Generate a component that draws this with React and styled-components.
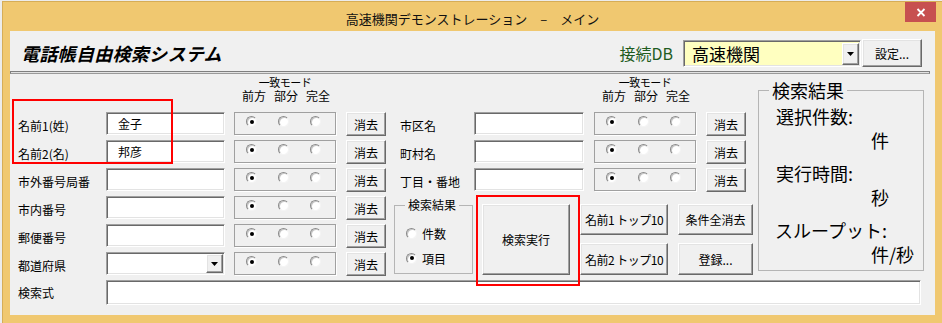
import React from 'react';
import styled, { createGlobalStyle, css } from 'styled-components';

const FONT = '"Noto Sans CJK JP", "Noto Sans", sans-serif';
const TIGHT_FONT = '"Liberation Sans", "Noto Sans CJK JP", sans-serif';

const GlobalStyle = createGlobalStyle`
  html, body { margin: 0; padding: 0; overflow: hidden; }
  body {
    width: 942px;
    height: 323px;
    background: #ececec;
    font-family: ${FONT};
    color: #000;
  }
  * { box-sizing: border-box; }
`;

const sunken = css`
  border: 1px solid;
  border-color: #a0a0a0 #ffffff #ffffff #a0a0a0;
  box-shadow: inset 1px 1px 0 #696969, inset -1px -1px 0 #e3e3e3;
`;

const raised = css`
  border: 1px solid;
  border-color: #ffffff #696969 #696969 #ffffff;
  box-shadow: inset -1px -1px 0 #a0a0a0, inset 1px 1px 0 #e3e3e3;
  background: #f0f0f0;
`;

const cell = css`
  grid-column: ${(p) => p.$col};
  grid-row: ${(p) => p.$row};
`;

const Window = styled.div`
  margin: 1px 0 0 2px;
  width: 941px;
  height: 330px;
  background: #f0c870;
  border: 1px solid #d6ad57;
  padding: 0 7px 7px 7px;
  display: flex;
  flex-direction: column;
`;

const TitleBar = styled.div`
  height: 29px;
  display: grid;
  grid-template-columns: 1fr auto 1fr;
  margin: 0 -1px 0 -1px;
`;

const TitleText = styled.div`
  grid-column: 2;
  font-size: 13px;
  line-height: 29px;
  padding-top: 2px;
  white-space: nowrap;
  color: #111;
`;

const CloseButton = styled.div`
  grid-column: 3;
  justify-self: end;
  width: 31px;
  height: 20px;
  background: #c75050;
  display: flex;
  align-items: center;
  justify-content: center;
`;

const Client = styled.div`
  position: relative;
  height: 284px;
  background: #f0f0f0;
  display: flex;
  flex-direction: column;
`;

const Header = styled.div`
  height: 40px;
  display: flex;
  align-items: center;
  padding: 5px 13px 1px 11px;
`;

const AppTitle = styled.h1`
  margin: 0;
  flex: 1;
  font-size: 18px;
  line-height: 22px;
  font-weight: bold;
  font-style: italic;
  letter-spacing: 0.3px;
  white-space: nowrap;
`;

const DbLabel = styled.span`
  font-size: 16px;
  color: #1f5c1f;
  margin-right: 10px;
  white-space: nowrap;
`;

const DbCombo = styled.div`
  ${sunken};
  width: 178px;
  height: 27px;
  background: #ffffc0;
  display: flex;
  align-items: stretch;
  padding: 2px 1px 1px 2px;
`;

const ComboText = styled.span`
  flex: 1;
  font-size: 17px;
  line-height: 22px;
  padding-left: 6px;
  white-space: nowrap;
`;

const DropButton = styled.span`
  ${raised};
  width: 17px;
  display: flex;
  align-items: center;
  justify-content: center;
`;

const Button = styled.button`
  ${raised};
  font-family: ${FONT};
  font-size: 12px;
  color: #000;
  padding: 0;
  width: ${(p) => p.$w}px;
  height: ${(p) => p.$h}px;
  margin-left: ${(p) => p.$ml || 0}px;
  white-space: nowrap;
  display: flex;
  align-items: center;
  justify-content: center;
  letter-spacing: ${(p) => p.$ls || 0}px;
  ${cell};
`;

const Separator = styled.div`
  height: 3px;
  margin-right: 5px;
  border: 1px solid #7f7f7f;
  border-bottom-color: #9a9a9a;
  background: #e2e2e2;
`;

const FormGrid = styled.div`
  display: grid;
  margin-top: 2px;
  padding-left: 8px;
  grid-template-columns:
    [lab] 88px [inp] 119px 9px [rad] 102px 10px [btn] 40px
    [gap2] 14px [lab2] 74px [inp2] 110px 10px [rad2] 102px 10px [btn2] 40px
    12px [res] 166px [end];
  grid-template-rows: 31px repeat(6, 23px) 25px;
  row-gap: 5px;
`;

const ModeHeader = styled.div`
  ${cell};
  align-self: end;
  padding-bottom: 3px;
  display: flex;
  flex-direction: column;
  align-items: center;
  font-family: ${TIGHT_FONT};
  font-size: 12px;
  line-height: 13.5px;
`;

const ModeTitle = styled.span`
  font-size: 11px;
  letter-spacing: -0.5px;
`;

const ModeNames = styled.span`
  display: flex;
  gap: 8px;
  margin-left: 2px;
`;

const FieldLabel = styled.div`
  ${cell};
  font-size: 12px;
  line-height: 14px;
  padding-top: ${(p) => p.$pt ?? 7}px;
  white-space: nowrap;
`;

const TextBox = styled.div`
  ${cell};
  ${sunken};
  background: #fff;
  height: ${(p) => p.$h || 23}px;
  margin-right: ${(p) => p.$mr || 0}px;
  font-size: 12px;
  line-height: 19px;
  padding: 1px 0 0 11px;
  display: flex;
  align-items: stretch;
`;

const BoxText = styled.span`
  flex: 1;
  white-space: nowrap;
`;

const ComboButton = styled.span`
  ${raised};
  width: 17px;
  margin: 0 1px 1px 0;
  display: flex;
  align-items: center;
  justify-content: center;
`;

const RadioGroup = styled.div`
  ${cell};
  height: 23px;
  border: 1px solid #a0a0a0;
  box-shadow: 1px 1px 0 #ffffff;
  display: flex;
  align-items: flex-start;
  gap: 21px;
  padding: 3px 0 0 11px;
`;

const RadioCircle = styled.span`
  flex: none;
  width: 11px;
  height: 11px;
  border-radius: 50%;
  border: 1px solid;
  border-color: #8a8a8a #f4f4f4 #f4f4f4 #8a8a8a;
  background: #fff;
  box-shadow: inset 1px 1px 0 #c8c8c8;
  display: flex;
  align-items: center;
  justify-content: center;
  &::after {
    content: '';
    width: 4px;
    height: 4px;
    border-radius: 50%;
    background: #000;
    display: ${(p) => (p.$checked ? 'block' : 'none')};
  }
`;

const LowerBlock = styled.div`
  ${cell};
  display: flex;
  align-items: flex-start;
  gap: 10px;
  padding-left: 8px;
`;

const GroupBox = styled.fieldset`
  margin: ${(p) => p.$mt}px ${(p) => p.$mr || 0}px 0 0;
  padding: ${(p) => p.$pt}px 0 0 0;
  min-width: 0;
  width: ${(p) => p.$w}px;
  height: ${(p) => p.$h}px;
  border: 1px solid #b5b5b5;
  align-self: start;
  ${cell};
`;

const GroupLegend = styled.legend`
  margin-left: 10px;
  padding: 0 3px;
  font-size: ${(p) => p.$fs}px;
  line-height: ${(p) => p.$lh}px;
  white-space: nowrap;
`;

const OptionRow = styled.label`
  display: flex;
  align-items: center;
  gap: 5px;
  height: 20px;
  padding-left: 11px;
  margin-bottom: 5px;
  font-size: 12px;
`;

const ButtonColumn = styled.div`
  margin-top: 8px;
  display: flex;
  flex-direction: column;
  gap: 8px;
`;

const ExecButton = styled(Button)`
  margin-top: 8px;
`;

const ResultLine = styled.div`
  font-size: 18px;
  line-height: 24px;
  padding-left: ${(p) => p.$indent}px;
  margin-top: ${(p) => p.$mt || 0}px;
  white-space: nowrap;
`;

const Highlight = styled.div`
  position: absolute;
  left: ${(p) => p.$x}px;
  top: ${(p) => p.$y}px;
  width: ${(p) => p.$w}px;
  height: ${(p) => p.$h}px;
  border: 2px solid #ff0000;
  pointer-events: none;
`;

const Arrow = () => (
  <svg width="7" height="4" viewBox="0 0 7 4">
    <polygon points="0,0 7,0 3.5,4" fill="#000" />
  </svg>
);

const CloseGlyph = () => (
  <svg width="10" height="9" viewBox="0 0 10 9">
    <path d="M1.5 1 L8.5 8 M8.5 1 L1.5 8" stroke="#fff" strokeWidth="1.8" fill="none" />
  </svg>
);

const Radios = ({ col, row }) => (
  <RadioGroup $col={col} $row={row}>
    <RadioCircle $checked />
    <RadioCircle />
    <RadioCircle />
  </RadioGroup>
);

const Mode = ({ col }) => (
  <ModeHeader $col={col} $row="1">
    <ModeTitle>一致モード</ModeTitle>
    <ModeNames>
      <span>前方</span>
      <span>部分</span>
      <span>完全</span>
    </ModeNames>
  </ModeHeader>
);

const leftRows = [
  { label: '名前1(姓)', value: '金子' },
  { label: '名前2(名)', value: '邦彦' },
  { label: '市外番号局番' },
  { label: '市内番号' },
  { label: '郵便番号' },
  { label: '都道府県', combo: true },
];

const midRows = ['市区名', '町村名', '丁目・番地'];

export default function App() {
  return (
    <>
      <GlobalStyle />
      <Window>
        <TitleBar>
          <TitleText>高速機関デモンストレーション　–　メイン</TitleText>
          <CloseButton>
            <CloseGlyph />
          </CloseButton>
        </TitleBar>
        <Client>
          <Header>
            <AppTitle>電話帳自由検索システム</AppTitle>
            <DbLabel>接続DB</DbLabel>
            <DbCombo>
              <ComboText>高速機関</ComboText>
              <DropButton>
                <Arrow />
              </DropButton>
            </DbCombo>
            <Button $w={60} $h={28} $ml={1}>設定...</Button>
          </Header>
          <Separator />
          <FormGrid>
            <Mode col="rad / span 1" />
            <Mode col="rad2 / span 1" />

            {leftRows.map((r, i) => {
              const row = `${i + 2}`;
              return (
                <React.Fragment key={r.label}>
                  <FieldLabel $col="lab / span 1" $row={row}>{r.label}</FieldLabel>
                  <TextBox $col="inp / span 1" $row={row}>
                    <BoxText>{r.value || ''}</BoxText>
                    {r.combo && (
                      <ComboButton>
                        <Arrow />
                      </ComboButton>
                    )}
                  </TextBox>
                  <Radios col="rad / span 1" row={row} />
                  <Button $col="btn / span 1" $row={row} $w={40} $h={24}>消去</Button>
                </React.Fragment>
              );
            })}

            {midRows.map((label, i) => {
              const row = `${i + 2}`;
              return (
                <React.Fragment key={label}>
                  <FieldLabel $col="lab2 / span 1" $row={row}>{label}</FieldLabel>
                  <TextBox $col="inp2 / span 1" $row={row}>
                    <BoxText />
                  </TextBox>
                  <Radios col="rad2 / span 1" row={row} />
                  <Button $col="btn2 / span 1" $row={row} $w={40} $h={24}>消去</Button>
                </React.Fragment>
              );
            })}

            <LowerBlock $col="gap2 / res" $row="5 / 8">
              <GroupBox $mt={2} $mr={-1} $pt={11} $w={79} $h={76}>
                <GroupLegend $fs={12} $lh={14}>検索結果</GroupLegend>
                <OptionRow>
                  <RadioCircle />
                  件数
                </OptionRow>
                <OptionRow>
                  <RadioCircle $checked />
                  項目
                </OptionRow>
              </GroupBox>
              <ExecButton $w={88} $h={71}>検索実行</ExecButton>
              <ButtonColumn>
                <Button $w={88} $h={31} $ls={-0.5}>名前1 トップ10</Button>
                <Button $w={88} $h={32} $ls={-0.5}>名前2 トップ10</Button>
              </ButtonColumn>
              <ButtonColumn>
                <Button $w={75} $h={31}>条件全消去</Button>
                <Button $w={75} $h={32}>登録...</Button>
              </ButtonColumn>
            </LowerBlock>

            <GroupBox $col="res / span 1" $row="1 / 8" $mt={4} $pt={4} $w={166} $h={191}>
              <GroupLegend $fs={18} $lh={20}>検索結果</GroupLegend>
              <ResultLine $indent={17}>選択件数:</ResultLine>
              <ResultLine $indent={112}>件</ResultLine>
              <ResultLine $indent={17} $mt={9}>実行時間:</ResultLine>
              <ResultLine $indent={112}>秒</ResultLine>
              <ResultLine $indent={16} $mt={9}>スループット:</ResultLine>
              <ResultLine $indent={112}>件/秒</ResultLine>
            </GroupBox>

            <FieldLabel $col="lab / span 1" $row="8" $pt={6}>検索式</FieldLabel>
            <TextBox $col="inp / end" $row="8" $h={25} $mr={3}>
              <BoxText />
            </TextBox>
          </FormGrid>
          <Highlight $x={2} $y={68} $w={161} $h={65} />
          <Highlight $x={466} $y={164} $w={104} $h={91} />
        </Client>
      </Window>
    </>
  );
}
